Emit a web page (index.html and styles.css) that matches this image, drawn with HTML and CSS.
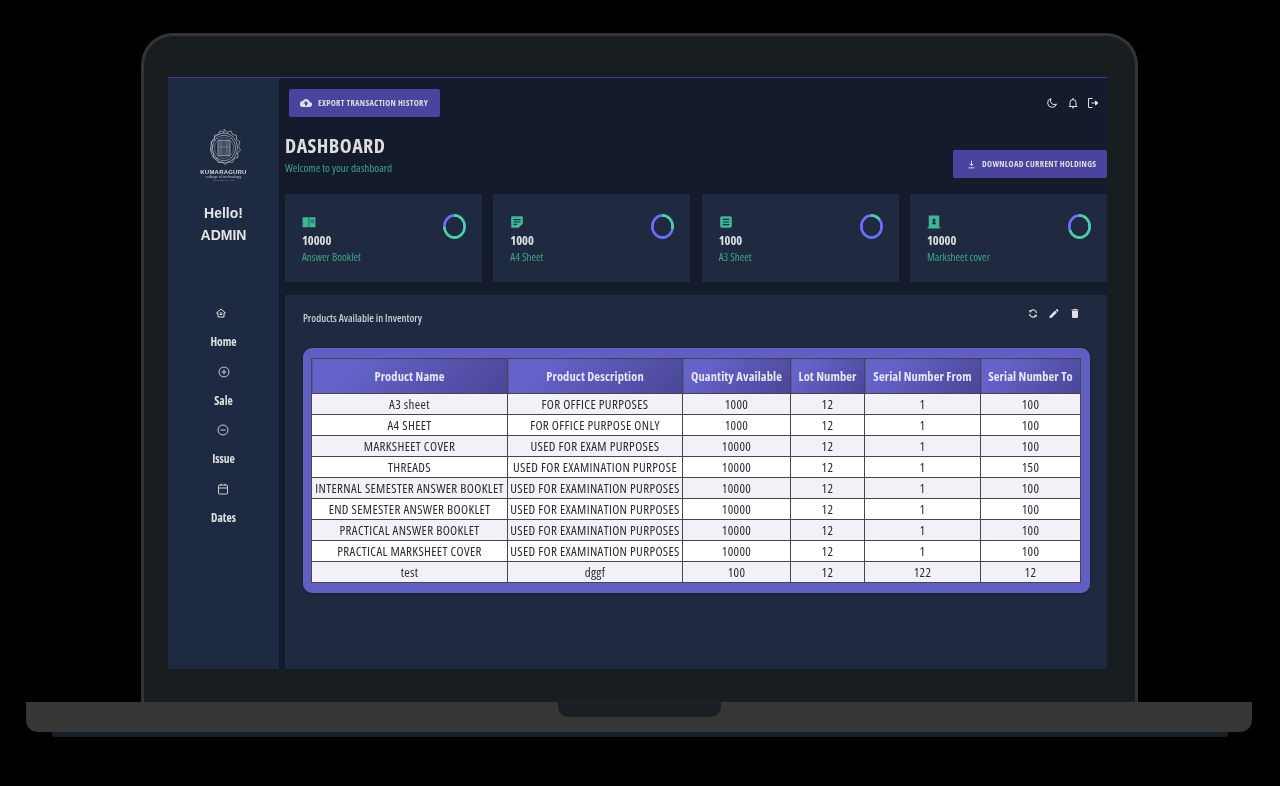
FILE: index.html
```html
<!DOCTYPE html>
<html lang="en">
<head>
<meta charset="utf-8">
<title>Inventory Dashboard</title>
<link rel="stylesheet" href="styles.css">
</head>
<body>
<div class="laptop">
  <div class="lid">
    <div class="screen">
      <aside class="sidebar">
        <div class="logo">
          <svg class="logo-mark" viewBox="0 0 36 36" preserveAspectRatio="none" fill="none" stroke="#c9ced6" stroke-width=".6">
            <path d="M18 1l3 3 4-1.500 1.500 3.500 4 .5 0 4 3.500 2-1.500 4 2 3.500-3 2.500 .5 4-4 1-1.500 3.500-4-.5-3 2.500-3-2.500-4 .5-1.500-3.500-4-1 .5-4-3-2.500 2-3.500-1.500-4 3.500-2 0-4 4-.5 1.500-3.500 4 1.500z"/>
            <circle cx="18" cy="18" r="13.500"/><circle cx="18" cy="18" r="11.500"/><circle cx="18" cy="18" r="9.500" stroke="#7f8794"/>
            <rect x="12" y="11" width="12" height="14" rx="1" fill="#454f60"/>
            <path d="M15 11v14M21 11v14M12 17h12" stroke="#8a93a1"/>
          </svg>
          <div class="logo-name">KUMARAGURU</div>
          <div class="logo-sub">college of technology</div>
          <div class="logo-tiny">INSPIRED BY LIFE</div>
        </div>
        <div class="hello">Hello!<br>ADMIN</div>
        <nav class="nav">
          <a class="nav-item nav-home">
            <svg class="nav-icon" viewBox="0 0 24 24" fill="none" stroke="#e0e0e0" stroke-width="2"><path d="M12 4l9 8h-3v8H6v-8H3z"/><path d="M9.500 15h5M9.500 12h5"/></svg>
            <span>Home</span>
          </a>
          <a class="nav-item">
            <svg class="nav-icon" viewBox="0 0 24 24" fill="none" stroke="#e0e0e0" stroke-width="1.800"><circle cx="12" cy="12" r="10"/><path d="M12 7v10M7 12h10"/></svg>
            <span>Sale</span>
          </a>
          <a class="nav-item nav-off">
            <svg class="nav-icon" viewBox="0 0 24 24" fill="none" stroke="#e0e0e0" stroke-width="1.800"><circle cx="12" cy="12" r="10"/><path d="M7 12h10"/></svg>
            <span>Issue</span>
          </a>
          <a class="nav-item nav-off">
            <svg class="nav-icon" viewBox="0 0 24 24" fill="none" stroke="#e0e0e0" stroke-width="1.800"><rect x="3" y="4" width="18" height="18" rx="2"/><path d="M3 10h18M8 1.500v4M16 1.500v4"/></svg>
            <span>Dates</span>
          </a>
        </nav>
      </aside>
      <main class="main">
        <div class="topbar">
          <button class="btn btn-export">
            <svg class="btn-icon-cloud" viewBox="0 0 24 24" fill="#e0e0e0"><path d="M19.400 10a7.500 7.500 0 0 0-14-2A6 6 0 0 0 6 20h13a5 5 0 0 0 .4-10zM14 13v4h-4v-4H7l5-5 5 5z"/></svg>
            EXPORT TRANSACTION HISTORY
          </button>
          <div class="top-icons">
            <svg viewBox="0 0 24 24" fill="none" stroke="#e0e0e0" stroke-width="2"><path d="M10 3a9 9 0 1 0 11 11 8 8 0 0 1-11-11z"/></svg>
            <svg viewBox="0 0 24 24" fill="none" stroke="#e0e0e0" stroke-width="2"><path d="M6 17v-6a6 6 0 0 1 12 0v6l2 2H4z"/><path d="M10 21.500h4M12 2v3"/></svg>
            <svg viewBox="0 0 24 24" fill="none" stroke="#e0e0e0" stroke-width="2"><path d="M11 3H3v18h8"/><path d="M9 12h9"/><path d="M17 8l5 4-5 4z" fill="#e0e0e0"/></svg>
          </div>
        </div>
        <header class="page-head">
          <div>
            <h1 class="title">DASHBOARD</h1>
            <p class="subtitle">Welcome to your dashboard</p>
          </div>
          <button class="btn btn-download">
            <svg class="btn-icon-dl" viewBox="0 0 24 24" fill="none" stroke="#e0e0e0" stroke-width="2.500"><path d="M12 2v13M7 10l5 5 5-5M4 21h16"/></svg>
            DOWNLOAD CURRENT HOLDINGS
          </button>
        </header>
        <section class="cards">
          <article class="card">
            <div class="card-text">
              <svg class="card-icon" viewBox="0 0 24 24" fill="#3fb795"><path d="M1 4h10.500v17H1zM12.500 4H23v17H12.500z"/><path d="M15 8h6v1.500h-6zM15 11.500h6V13h-6z" fill="#1f2a40"/></svg>
              <div class="num">10000</div>
              <div class="label">Answer Booklet</div>
            </div>
            <div class="ring" style="--p:270deg"></div>
          </article>
          <article class="card">
            <div class="card-text">
              <svg class="card-icon" viewBox="0 0 24 24" fill="#3fb795"><path d="M2 4a2 2 0 0 1 2-2h16a2 2 0 0 1 2 2v11l-7 7H4a2 2 0 0 1-2-2z"/><path d="M6 7h12v2H6zM6 11h12v2H6zM6 15h6v2H6z" fill="#1f2a40"/></svg>
              <div class="num">1000</div>
              <div class="label">A4 Sheet</div>
            </div>
            <div class="ring" style="--p:105deg"></div>
          </article>
          <article class="card">
            <div class="card-text">
              <svg class="card-icon" viewBox="0 0 24 24" fill="#3fb795"><rect x="2" y="2" width="20" height="20" rx="3"/><path d="M6.500 6.500h11v2h-11zM6.500 11h11v2h-11zM6.500 15.500h11v2h-11z" fill="#1f2a40"/></svg>
              <div class="num">1000</div>
              <div class="label">A3 Sheet</div>
            </div>
            <div class="ring" style="--p:50deg"></div>
          </article>
          <article class="card">
            <div class="card-text">
              <svg class="card-icon" viewBox="0 0 24 24" fill="#3fb795"><path d="M3 1h18v20h2v2H1v-2h2z"/><path d="M12 5l3.500 5H13.500v2l2.500 4H8l2.500-4v-2H8.500z" fill="#1f2a40"/></svg>
              <div class="num">10000</div>
              <div class="label">Marksheet cover</div>
            </div>
            <div class="ring" style="--p:250deg"></div>
          </article>
        </section>
        <section class="panel">
          <div class="panel-head">
            <h2 class="panel-title">Products Available in Inventory</h2>
            <div class="panel-tools">
              <svg viewBox="0 0 24 24" fill="none" stroke="#e0e0e0" stroke-width="2.500"><path d="M19 11a7 7 0 0 0-12.500-3.500M5 13a7 7 0 0 0 12.500 3.500"/><path d="M4 5l1 5 5-1zM20 19l-1-5-5 1z" fill="#e0e0e0" stroke="none"/></svg>
              <svg viewBox="0 0 24 24" fill="#e0e0e0"><path d="M3 17.250V21h3.750L17.800 9.950l-3.750-3.750zM20.700 7.050a1 1 0 0 0 0-1.400l-2.350-2.350a1 1 0 0 0-1.400 0L15.100 5.150l3.750 3.750z"/></svg>
              <svg viewBox="0 0 24 24" fill="#e0e0e0"><path d="M6 19a2 2 0 0 0 2 2h8a2 2 0 0 0 2-2V7H6zM19 4h-3.500l-1-1h-5l-1 1H5v2h14z"/></svg>
            </div>
          </div>
          <div class="table-wrap">
            <table class="stock">
              <colgroup>
                <col class="c1"><col class="c2"><col class="c3"><col class="c4"><col class="c5"><col class="c6">
              </colgroup>
              <thead>
                <tr><th>Product Name</th><th>Product Description</th><th>Quantity Available</th><th>Lot Number</th><th>Serial Number From</th><th>Serial Number To</th></tr>
              </thead>
              <tbody>
                <tr><td>A3 sheet</td><td>FOR OFFICE PURPOSES</td><td>1000</td><td>12</td><td>1</td><td>100</td></tr>
                <tr><td>A4 SHEET</td><td>FOR OFFICE PURPOSE ONLY</td><td>1000</td><td>12</td><td>1</td><td>100</td></tr>
                <tr><td>MARKSHEET COVER</td><td>USED FOR EXAM PURPOSES</td><td>10000</td><td>12</td><td>1</td><td>100</td></tr>
                <tr><td>THREADS</td><td>USED FOR EXAMINATION PURPOSE</td><td>10000</td><td>12</td><td>1</td><td>150</td></tr>
                <tr><td>INTERNAL SEMESTER ANSWER BOOKLET</td><td>USED FOR EXAMINATION PURPOSES</td><td>10000</td><td>12</td><td>1</td><td>100</td></tr>
                <tr><td>END SEMESTER ANSWER BOOKLET</td><td>USED FOR EXAMINATION PURPOSES</td><td>10000</td><td>12</td><td>1</td><td>100</td></tr>
                <tr><td>PRACTICAL ANSWER BOOKLET</td><td>USED FOR EXAMINATION PURPOSES</td><td>10000</td><td>12</td><td>1</td><td>100</td></tr>
                <tr><td>PRACTICAL MARKSHEET COVER</td><td>USED FOR EXAMINATION PURPOSES</td><td>10000</td><td>12</td><td>1</td><td>100</td></tr>
                <tr><td>test</td><td>dggf</td><td>100</td><td>12</td><td>122</td><td>12</td></tr>
              </tbody>
            </table>
          </div>
        </section>
      </main>
    </div>
  </div>
  <div class="base"><div class="notch"></div></div>
  <div class="foot"></div>
</div>
</body>
</html>
```
FILE: styles.css
```css
* { box-sizing: border-box; }
html, body { margin: 0; height: 100%; background: #000; overflow: hidden; }
body { font-family: "Open Sans", "Noto Sans", sans-serif; font-stretch: 75%; color: #e0e0e0; }

.laptop { padding-top: 33px; filter: blur(.45px); }
.lid {
  width: 997px; height: 669px; margin-left: 141px;
  padding: 41px 28px 30px 24px;
  background: #181d20;
  border: 3px solid #343434; border-bottom: 0;
  border-radius: 32px 32px 0 0;
}
.screen { display: flex; height: 592px; background: linear-gradient(#3f3a9c 1px, #141b2d 1px); }

.sidebar { width: 111px; flex: none; margin-top: 1px; background: #1e2a42; display: flex; flex-direction: column; align-items: center; }
.logo { margin-top: 50px; display: flex; flex-direction: column; align-items: center; color: #d5d8dd; }
.logo-mark { width: 36px; height: 40px; display: block; }
.logo-name { font: bold 6px/6px "Liberation Sans", sans-serif; margin-top: 1px; letter-spacing: .2px; }
.logo-sub { font: 3.800px/4px "Liberation Sans", sans-serif; color: #b7bcc5; }
.logo-tiny { font: 2.500px/4px "Liberation Sans", sans-serif; color: #7e8694; }
.hello { margin-top: 19px; font: bold 14px/22px "Liberation Sans", sans-serif; text-align: center; color: #e4e4e4; }

.nav { margin-top: 61px; display: flex; flex-direction: column; }
.nav-item { height: 58.670px; display: flex; flex-direction: column; align-items: center; font-size: 11.500px; line-height: 14px; font-weight: 700; color: #e0e0e0; }
.nav-icon { width: 12px; height: 12px; flex: none; display: block; margin-bottom: 16px; }
.nav-home .nav-icon { margin-left: -6px; }
.nav-off .nav-icon { margin-left: -2px; }

.main { flex: 1; min-width: 0; margin-top: 1px; padding-left: 6px; }
.topbar { display: flex; justify-content: space-between; align-items: center; padding: 11px 8px 0 4px; height: 39px; }
.btn {
  display: flex; align-items: center; height: 28px; border: 0; border-radius: 2px;
  background: #4a449f; color: #dcdcdc;
  font-family: "Open Sans", sans-serif; font-stretch: 75%; font-size: 8.500px; letter-spacing: .3px; line-height: 1; font-weight: 700; white-space: nowrap;
}
.btn-export { width: 151px; padding-left: 11px; gap: 6px; }
.btn-icon-cloud { width: 12px; height: 12px; flex: none; }
.top-icons { display: flex; gap: 8.500px; }
.top-icons svg { width: 12px; height: 12px; display: block; }

.page-head { display: flex; justify-content: space-between; height: 77px; padding-top: 19px; }
.title { margin: 0; font-size: 20px; line-height: 20px; letter-spacing: .45px; font-weight: 700; color: #dedede; }
.subtitle { margin: 5px 0 0; font-size: 11px; line-height: 14px; color: #3da58a; }
.btn-download { width: 154px; margin-top: 14px; padding-left: 14px; gap: 6px; }
.btn-icon-dl { width: 9px; height: 11px; flex: none; }

.cards { display: grid; grid-template-columns: repeat(4, 1fr); column-gap: 11.330px; height: 88px; }
.card { background: #1f2a40; padding: 21px 16px 0 17px; display: flex; justify-content: space-between; }
.card-icon { width: 14px; height: 14px; display: block; }
.num { margin-top: 5px; font-size: 12.500px; line-height: 14px; font-weight: 700; color: #e0e0e0; }
.label { margin-top: 2px; font-size: 11px; line-height: 13px; color: #3da58a; }
.ring {
  width: 23px; height: 25px; border-radius: 50%; margin-top: -1px;
  background:
    radial-gradient(closest-side, #1f2a40 74%, transparent 79%),
    conic-gradient(#4cceac 0 var(--p), #6870fa var(--p) 360deg);
}

.panel { margin-top: 13px; height: 374px; background: #1f2a40; padding: 0 17px 0 18px; }
.panel-head { display: flex; justify-content: space-between; height: 53px; padding-top: 12px; }
.panel-title { margin: 5px 0 0; font-size: 10.500px; line-height: 13px; font-weight: 600; color: #c8ccd2; }
.panel-tools { display: flex; gap: 9px; padding: 0 9px 0 0; }
.panel-tools svg { width: 12px; height: 13px; display: block; }

.table-wrap { width: 787px; padding: 10px 10px 10px 8px; background: #6160c2; border-radius: 9px; box-shadow: 0 1px 3px #1a2136; }
.stock { border-collapse: collapse; table-layout: fixed; width: 769px; height: 224px; font-size: 13px; letter-spacing: .35px; }
.c1 { width: 196px; } .c2 { width: 175px; } .c3 { width: 108px; } .c4 { width: 74px; } .c5 { width: 116px; } .c6 { width: 100px; }
.stock th, .stock td { border: 1px solid #44464c; text-align: center; padding: 0; white-space: nowrap; overflow: hidden; }
.stock th { height: 35px; font-size: 12.500px; letter-spacing: .1px; font-weight: 700; color: #e6e6ee; background: linear-gradient(135deg, #6562ca 20%, #4a4696 100%); }
.stock td { height: 21px; color: #2a2a30; background: #fff; }
.stock tbody tr:nth-child(odd) td { background: #f3f1f7; }

.base { position: relative; width: 1226px; height: 30px; margin-left: 26px; background: #363636; border-radius: 0 0 12px 12px; }
.notch { position: absolute; left: 532px; top: 0; width: 163px; height: 15px; background: #1a2025; border-radius: 0 0 10px 10px; }
.foot { width: 1176px; height: 5px; margin-left: 52px; background: #1a2028; border-radius: 0 0 4px 4px; }
```
